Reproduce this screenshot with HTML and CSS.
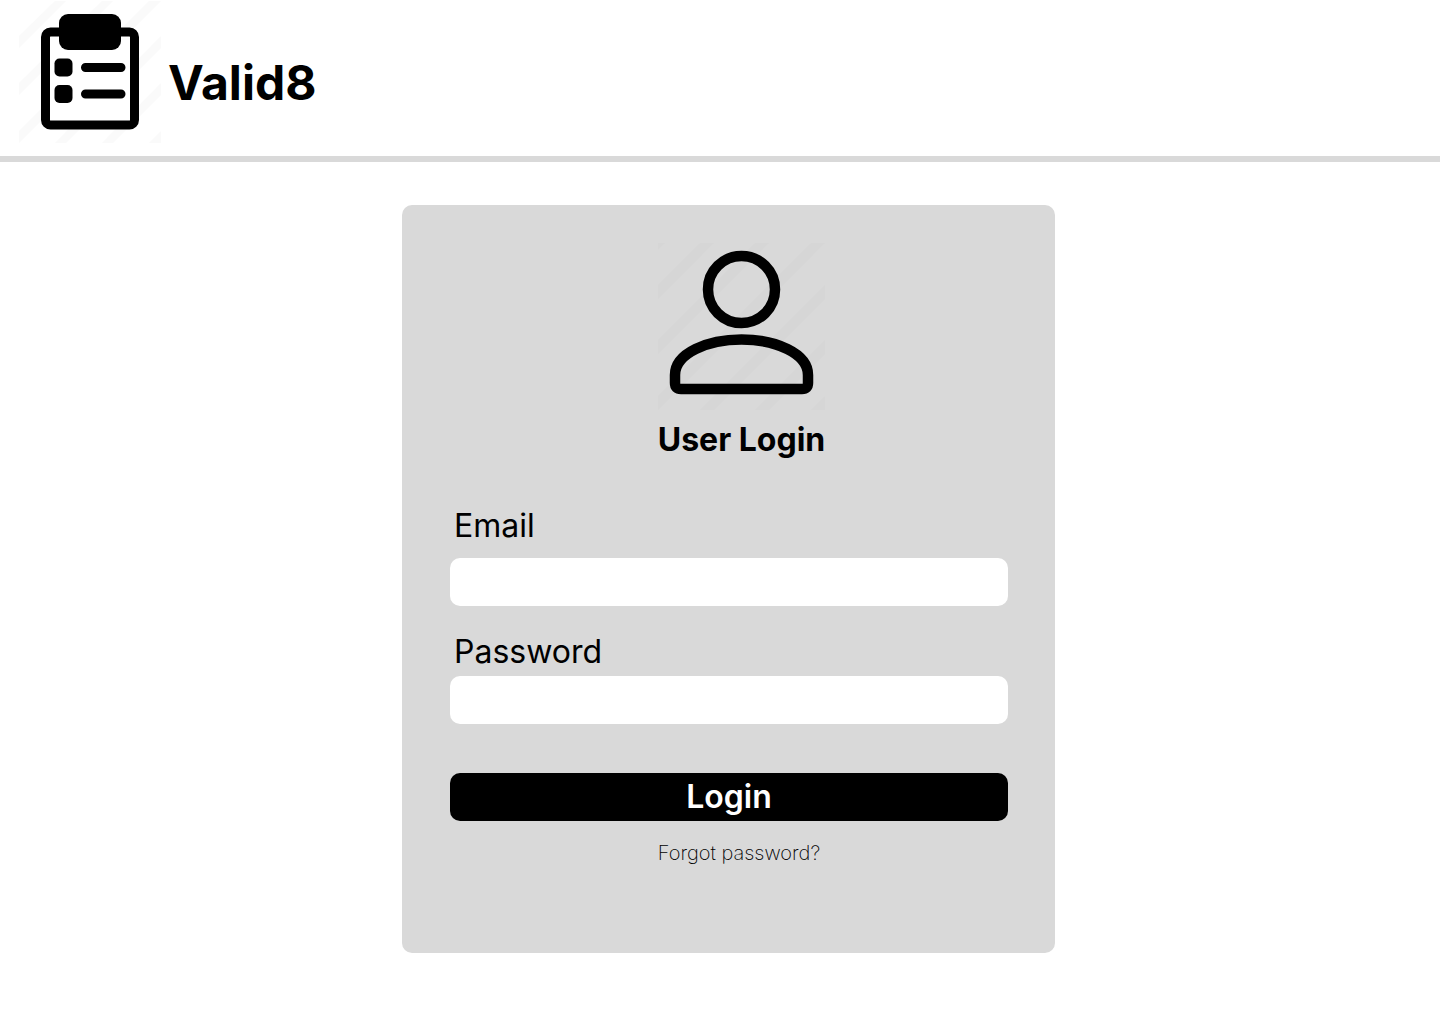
FILE: index.html
```html
<!DOCTYPE html>
<html lang="en">
<head>
  <meta charset="utf-8">
  <meta name="viewport" content="width=device-width, initial-scale=1">
  <title>Valid8</title>
  <link rel="stylesheet" href="styles.css">
</head>
<body>
  <header class="site-header">
    <svg class="logo" viewBox="19 1 142 142" aria-hidden="true">
      <path class="logo-stripes" d="M55 1h11L19 48V36zM102 1h11L19 95V83zM149 1h12L19 143v-12zM161 36v12l-95 95H55zM161 83v12l-48 48h-11zM161 131v12h-12z"/>
      <rect x="45.500" y="32" width="89" height="93" rx="5" fill="#fff" stroke="#000" stroke-width="9"/>
      <rect x="59" y="14" width="62" height="36" rx="9"/>
      <rect x="54.500" y="58.500" width="18" height="18" rx="5"/>
      <rect x="54.500" y="85" width="18" height="18" rx="5"/>
      <path d="M85.500 67.500H121M85.500 94H121" stroke="#000" stroke-width="9" stroke-linecap="round"/>
    </svg>
    <span class="brand">Valid8</span>
  </header>

  <main class="page">
    <form class="card">
      <div class="card-heading">
        <svg class="avatar" viewBox="658 243 167 167" aria-hidden="true">
          <path class="avatar-stripes" d="M658 243h7l-7 7zM700 243h14l-56 56v-14zM755 243h14L658 354v-14zM811 243h14L658 410v-14zM825 285v14L714 410h-14zM825 340v14l-56 56h-14zM825 396v14h-14z"/>
          <circle cx="741.500" cy="289.500" r="33.500" fill="none" stroke="#000" stroke-width="10.500"/>
          <path d="M675 375C675 353 708 339.500 741.500 339.500S808 353 808 375V383Q808 389 802 389H681Q675 389 675 383Z" fill="none" stroke="#000" stroke-width="10.500"/>
        </svg>
        <h1 class="title">User Login</h1>
      </div>

      <div class="field field-email">
        <label class="label" for="email">Email</label>
        <input class="input" id="email" name="email" type="email" autocomplete="email">
      </div>
      <div class="field">
        <label class="label" for="password">Password</label>
        <input class="input" id="password" name="password" type="password" autocomplete="current-password">
      </div>

      <button class="submit" type="submit">Login</button>
      <a class="forgot" href="#forgot">Forgot password?</a>
    </form>
  </main>
</body>
</html>
```
FILE: styles.css
```css
* {
  box-sizing: border-box;
}

body {
  margin: 0;
  background: #fff;
  color: #000;
  font-family: Inter, "Liberation Sans", sans-serif;
}

.site-header {
  display: flex;
  align-items: center;
  gap: 7px;
  padding: 1px 19px 13px;
  border-bottom: 6px solid #d9d9d9;
}

.logo {
  width: 142px;
  height: 142px;
}

.logo-stripes {
  fill: #fafafa;
}

.brand {
  padding-top: 22px;
  font-size: 48px;
  line-height: 60px;
  font-weight: 700;
}

.page {
  display: flex;
  justify-content: center;
  padding: 43px 0 43px 17px;
}

.card {
  display: flex;
  flex-direction: column;
  width: 100%;
  max-width: 653px;
  padding: 38px 47px 88px 48px;
  border-radius: 10px;
  background: #d9d9d9;
}

.card-heading {
  display: flex;
  flex-direction: column;
  align-items: center;
  gap: 10px;
  padding-left: 25px;
}

.avatar {
  width: 167px;
  height: 167px;
}

.avatar-stripes {
  fill: #d6d6d6;
}

.title {
  margin: 0;
  font-size: 32px;
  line-height: 40px;
  font-weight: 700;
}

.field {
  display: flex;
  flex-direction: column;
  gap: 4px;
  margin-top: 26px;
}

.field-email {
  gap: 12px;
  margin-top: 46px;
}

.label {
  padding-left: 4px;
  font-size: 32px;
  line-height: 40px;
  font-weight: 400;
}

.input {
  width: 100%;
  height: 48px;
  padding: 0 16px;
  border: 0;
  border-radius: 10px;
  background: #fff;
  color: #000;
  font: inherit;
  font-size: 20px;
}

.submit {
  height: 48px;
  margin-top: 49px;
  padding: 0;
  border: 0;
  border-radius: 10px;
  background: #000;
  color: #fff;
  font: inherit;
  font-size: 32px;
  line-height: 40px;
  font-weight: 600;
}

.forgot {
  align-self: center;
  margin-top: 20px;
  padding-left: 20px;
  color: #000;
  font-size: 20px;
  line-height: 24px;
  font-weight: 200;
  text-decoration: none;
}
```
